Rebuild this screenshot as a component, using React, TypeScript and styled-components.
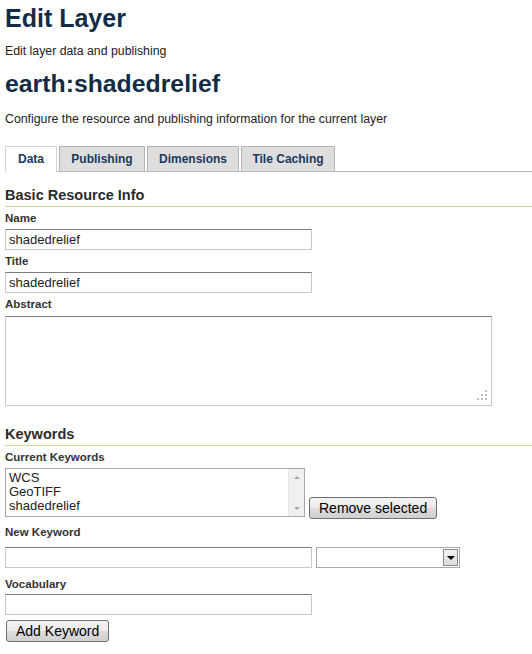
import React from "react";
import styled, { createGlobalStyle } from "styled-components";

const Global = createGlobalStyle`
  html, body { margin: 0; padding: 0; background: #fff; }
  body { font-family: "Liberation Sans", Arial, sans-serif; color: #222; }
  * { box-sizing: border-box; }
`;

const Page = styled.div`
  padding: 0 0 0 5px;
  width: 532px;
`;

const PageTitle = styled.h1`
  margin: 0;
  padding-top: 2px;
  font-size: 25px;
  line-height: 32px;
  font-weight: bold;
  color: #132c45;
`;

const Intro = styled.p<{ $mt: number }>`
  margin: ${(p) => p.$mt}px 0 0;
  font-size: 12.3px;
  line-height: 14px;
  color: #222;
`;

const LayerName = styled.h2`
  margin: 11px 0 0;
  font-size: 24.8px;
  line-height: 30px;
  font-weight: bold;
  color: #132c45;
`;

const TabBar = styled.div`
  display: flex;
  align-items: flex-end;
  gap: 2px;
  margin-top: 20px;
  height: 26px;
  border-bottom: 1px solid #b9b9b9;
`;

const Tab = styled.div<{ $active?: boolean; $w: number }>`
  width: ${(p) => p.$w}px;
  height: ${(p) => (p.$active ? 26 : 25)}px;
  margin-bottom: ${(p) => (p.$active ? -1 : 0)}px;
  border: 1px solid ${(p) => (p.$active ? "#d2d2d2" : "#b4b4b4")};
  border-bottom: none;
  background: ${(p) => (p.$active ? "#fff" : "#dedede")};
  font-size: 12px;
  font-weight: bold;
  line-height: 24px;
  text-align: center;
  color: #1c3a5c;
  white-space: nowrap;
`;

const SectionHeading = styled.h3<{ $mt: number }>`
  margin: ${(p) => p.$mt}px 0 0;
  padding-bottom: 2px;
  font-size: 14.5px;
  line-height: 17px;
  font-weight: bold;
  color: #2b2b2b;
  border-bottom: 1px solid #c3dc9c;
`;

const Label = styled.label<{ $mt: number; $mb: number }>`
  display: block;
  margin: ${(p) => p.$mt}px 0 ${(p) => p.$mb}px;
  font-size: 11.5px;
  line-height: 13px;
  font-weight: bold;
  color: #333;
`;

const TextInput = styled.input<{ $w: number }>`
  display: block;
  width: ${(p) => p.$w}px;
  height: 21px;
  margin: 0;
  padding: 0 3px;
  border: 1px solid #c9c9c9;
  border-top-color: #7c7c7c;
  background: #fff;
  font-family: "Liberation Sans", Arial, sans-serif;
  font-size: 13px;
  color: #222;
  outline: none;
`;

const AreaWrap = styled.div`
  position: relative;
  width: 487px;
  height: 90px;
`;

const TextArea = styled.textarea`
  display: block;
  width: 100%;
  height: 100%;
  margin: 0;
  padding: 2px 3px;
  border: 1px solid #c9c9c9;
  border-top-color: #7c7c7c;
  resize: none;
  outline: none;
  font-family: "Liberation Sans", Arial, sans-serif;
  font-size: 13px;
`;

const Grip = styled.svg`
  position: absolute;
  right: 4px;
  bottom: 5px;
`;

const ListRow = styled.div`
  display: flex;
  align-items: flex-end;
  gap: 4px;
`;

const ListBox = styled.div`
  display: flex;
  width: 300px;
  height: 49px;
  margin-bottom: 2px;
  border: 1px solid #a7a7a7;
  background: #fff;
`;

const ListItems = styled.div`
  flex: 1;
  padding: 2px 3px 0;
`;

const ListItem = styled.div`
  font-size: 13px;
  line-height: 14px;
  color: #222;
  white-space: nowrap;
`;

const ScrollTrack = styled.div`
  width: 16px;
  display: flex;
  flex-direction: column;
  justify-content: space-between;
  align-items: center;
  padding: 7px 0 6px;
  background: #f0f0f0;
  border-left: 1px solid #e6e6e6;
`;

const Arrow = styled.div<{ $up?: boolean }>`
  width: 0;
  height: 0;
  border-left: 3px solid transparent;
  border-right: 3px solid transparent;
  ${(p) => (p.$up ? "border-bottom: 3px solid #a8a8a8;" : "border-top: 3px solid #a8a8a8;")}
`;

const Button = styled.button<{ $ml?: number; $mt?: number }>`
  display: block;
  height: 22px;
  margin: ${(p) => p.$mt ?? 0}px 0 0 ${(p) => p.$ml ?? 0}px;
  padding: 0 9px;
  border: 1px solid #707070;
  border-radius: 3px;
  background: linear-gradient(to bottom, #f3f3f3 0%, #ebebeb 50%, #dddddd 51%, #d0d0d0 100%);
  font-family: "Liberation Sans", Arial, sans-serif;
  font-size: 14px;
  line-height: 20px;
  color: #000;
  white-space: nowrap;
`;

const InputRow = styled.div`
  display: flex;
  gap: 4px;
`;

const Select = styled.div`
  display: flex;
  justify-content: flex-end;
  align-items: center;
  width: 144px;
  height: 21px;
  padding-right: 1px;
  border: 1px solid #a9a9a9;
  background: #fff;
`;

const SelectButton = styled.div`
  display: flex;
  align-items: center;
  justify-content: center;
  width: 15px;
  height: 17px;
  border: 1px solid #8a8a8a;
  background: linear-gradient(to bottom, #f2f2f2, #dcdcdc);
`;

const SelectArrow = styled.div`
  width: 0;
  height: 0;
  border-left: 4px solid transparent;
  border-right: 4px solid transparent;
  border-top: 4px solid #000;
`;

export default function App() {
  return (
    <Page>
      <Global />
      <PageTitle>Edit Layer</PageTitle>
      <Intro $mt={10}>Edit layer data and publishing</Intro>
      <LayerName>earth:shadedrelief</LayerName>
      <Intro $mt={13}>Configure the resource and publishing information for the current layer</Intro>

      <TabBar>
        <Tab $active $w={52}>Data</Tab>
        <Tab $w={86}>Publishing</Tab>
        <Tab $w={92}>Dimensions</Tab>
        <Tab $w={94}>Tile Caching</Tab>
      </TabBar>

      <SectionHeading $mt={15}>Basic Resource Info</SectionHeading>
      <Label $mt={5} $mb={4}>Name</Label>
      <TextInput $w={307} defaultValue="shadedrelief" />
      <Label $mt={5} $mb={4}>Title</Label>
      <TextInput $w={307} defaultValue="shadedrelief" />
      <Label $mt={5} $mb={5}>Abstract</Label>
      <AreaWrap>
        <TextArea />
        <Grip width="11" height="11" viewBox="0 0 11 11">
          <g fill="#bdbdbd">
            <rect x="8" y="0" width="2" height="2" />
            <rect x="4" y="4" width="2" height="2" />
            <rect x="8" y="4" width="2" height="2" />
            <rect x="0" y="8" width="2" height="2" />
            <rect x="4" y="8" width="2" height="2" />
            <rect x="8" y="8" width="2" height="2" />
          </g>
        </Grip>
      </AreaWrap>

      <SectionHeading $mt={20}>Keywords</SectionHeading>
      <Label $mt={5} $mb={4}>Current Keywords</Label>
      <ListRow>
        <ListBox>
          <ListItems>
            <ListItem>WCS</ListItem>
            <ListItem>GeoTIFF</ListItem>
            <ListItem>shadedrelief</ListItem>
          </ListItems>
          <ScrollTrack>
            <Arrow $up />
            <Arrow />
          </ScrollTrack>
        </ListBox>
        <Button>Remove selected</Button>
      </ListRow>

      <Label $mt={7} $mb={8}>New Keyword</Label>
      <InputRow>
        <TextInput $w={307} />
        <Select>
          <SelectButton>
            <SelectArrow />
          </SelectButton>
        </Select>
      </InputRow>

      <Label $mt={10} $mb={3}>Vocabulary</Label>
      <TextInput $w={307} />
      <Button $mt={5} $ml={1}>Add Keyword</Button>
    </Page>
  );
}
